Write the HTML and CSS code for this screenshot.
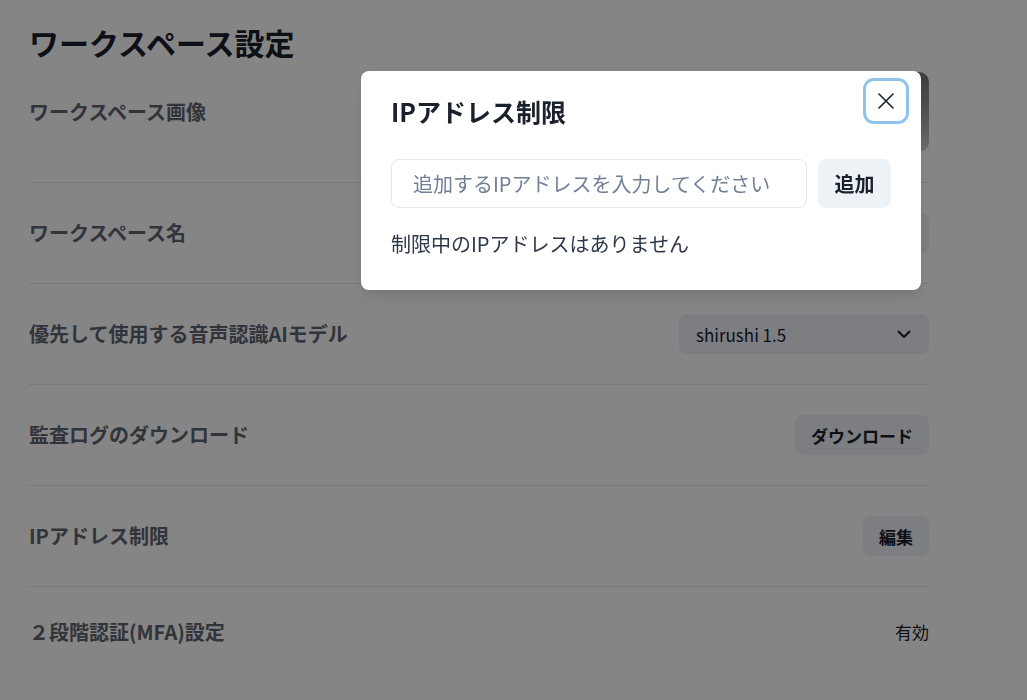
FILE: index.html
```html
<!DOCTYPE html>
<html lang="ja">
<head>
<meta charset="utf-8">
<title>ワークスペース設定</title>
<link rel="stylesheet" href="styles.css">
</head>
<body>
<main class="page">
  <h1 class="page-title">ワークスペース設定</h1>
  <section class="settings">
    <div class="row row-first">
      <div class="label">ワークスペース画像</div>
      <div class="ws-image"></div>
    </div>
    <div class="row">
      <div class="label">ワークスペース名</div>
      <div class="field"></div>
    </div>
    <div class="row">
      <div class="label">優先して使用する音声認識AIモデル</div>
      <div class="select">
        <span>shirushi 1.5</span>
        <svg class="chevron" width="14" height="9" viewBox="0 0 14 9"><path d="M1.5 1.5 L7 7 L12.5 1.5" fill="none" stroke="#1A202C" stroke-width="2" stroke-linecap="round" stroke-linejoin="round"/></svg>
      </div>
    </div>
    <div class="row">
      <div class="label">監査ログのダウンロード</div>
      <button class="btn">ダウンロード</button>
    </div>
    <div class="row">
      <div class="label">IPアドレス制限</div>
      <button class="btn">編集</button>
    </div>
    <div class="row row-last">
      <div class="label">２段階認証(MFA)設定</div>
      <div class="status">有効</div>
    </div>
  </section>
</main>

<div class="overlay">
  <div class="modal">
    <header class="modal-header">
      <h2 class="modal-title">IPアドレス制限</h2>
      <button class="close-btn" aria-label="閉じる">
        <svg width="18" height="18" viewBox="0 0 18 18"><path d="M2 2 L16 16 M16 2 L2 16" fill="none" stroke="#1A202C" stroke-width="1.6" stroke-linecap="round"/></svg>
      </button>
    </header>
    <div class="modal-body">
      <div class="add-row">
        <input class="ip-input" type="text" placeholder="追加するIPアドレスを入力してください">
        <button class="add-btn">追加</button>
      </div>
      <p class="empty">制限中のIPアドレスはありません</p>
    </div>
  </div>
</div>
</body>
</html>
```

FILE: styles.css
```css
* { box-sizing: border-box; }

html, body {
  margin: 0;
  padding: 0;
  background: #ffffff;
  font-family: "Noto Sans CJK JP", "Noto Sans", sans-serif;
  color: #1A202C;
}

.page {
  width: 900px;
  margin-left: 29px;
  padding-top: 24px;
}

.page-title {
  margin: 0 0 12px 0;
  font-size: 30px;
  line-height: 36px;
  font-weight: 700;
  color: #1A202C;
}

.settings {
  display: flex;
  flex-direction: column;
}

.row {
  display: flex;
  align-items: center;
  justify-content: space-between;
  padding: 30px 0;
  border-bottom: 1px solid #E2E8F0;
}

.row-first { padding-top: 0; }
.row-last { border-bottom: none; padding-top: 30px; }

.label {
  font-size: 20px;
  line-height: 30px;
  font-weight: 700;
  color: #5f6570;
}

.ws-image {
  width: 80px;
  height: 80px;
  border-radius: 10px;
  background: linear-gradient(180deg, #747474 0%, #a8a6aa 60%, #d4d0d8 100%);
}

.field {
  width: 250px;
  height: 40px;
  border-radius: 8px;
  background: #EDF2F7;
}

.select {
  width: 250px;
  height: 40px;
  border-radius: 8px;
  background: #EDF2F7;
  display: flex;
  align-items: center;
  justify-content: space-between;
  padding: 0 18px 0 17px;
  font-size: 17px;
  color: #1A202C;
}

.chevron { display: block; }

.btn {
  height: 40px;
  border: none;
  border-radius: 8px;
  background: #EDF2F7;
  padding: 0 16px;
  font-family: inherit;
  font-size: 17px;
  font-weight: 700;
  color: #1A202C;
}

.status {
  font-size: 17px;
  line-height: 30px;
  color: #1A202C;
}

.overlay {
  position: fixed;
  inset: 0;
  background: rgba(0, 0, 0, 0.48);
  display: flex;
  align-items: flex-start;
  justify-content: flex-start;
  padding: 71px 0 0 361px;
}

.modal {
  position: relative;
  width: 560px;
  background: #ffffff;
  border-radius: 8px;
  box-shadow: 0 10px 15px -3px rgba(0,0,0,0.1), 0 4px 6px -2px rgba(0,0,0,0.05);
}

.modal-header {
  padding: 24px 30px 0 30px;
}

.modal-title {
  margin: 0;
  font-size: 25px;
  line-height: 32px;
  font-weight: 700;
  color: #1A202C;
}

.close-btn {
  position: absolute;
  top: 10px;
  right: 15px;
  width: 40px;
  height: 40px;
  border: none;
  border-radius: 8px;
  background: #ffffff;
  box-shadow: 0 0 0 3px rgba(66, 153, 225, 0.6);
  display: flex;
  align-items: center;
  justify-content: center;
  padding: 0;
}

.close-btn svg { display: block; }

.modal-body {
  padding: 32px 30px 31px 30px;
}

.add-row {
  display: flex;
  gap: 11px;
}

.ip-input {
  flex: 1;
  height: 49px;
  border: 1px solid #E2E8F0;
  border-radius: 8px;
  padding: 0 20px 0 21px;
  font-family: inherit;
  font-size: 20px;
  color: #1A202C;
  background: #ffffff;
  outline: none;
}

.ip-input::placeholder { color: #718096; }

.add-btn {
  width: 73px;
  height: 49px;
  border: none;
  border-radius: 8px;
  background: #EDF2F7;
  font-family: inherit;
  font-size: 20px;
  font-weight: 700;
  color: #1A202C;
  padding: 0;
}

.empty {
  margin: 21px 0 0 0;
  font-size: 20px;
  line-height: 30px;
  color: #2D3748;
}
```
